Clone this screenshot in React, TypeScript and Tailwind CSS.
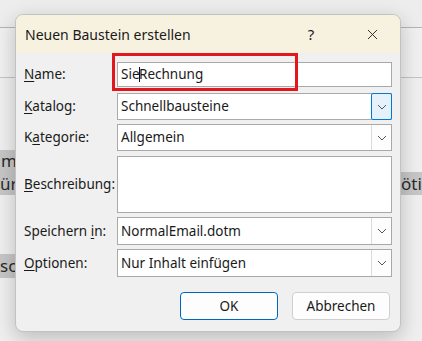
import { X } from 'lucide-react'

function Chevron() {
  return (
    <svg width="10" height="6" viewBox="0 0 10 6" fill="none">
      <path d="M1 1l4 4 4-4" stroke="#555" strokeWidth="1" />
    </svg>
  )
}

function Select({ value, focused }: { value: string; focused?: boolean }) {
  return (
    <div className="flex h-[27px] items-stretch border border-[#a9a9a9] bg-white">
      <div className="flex flex-1 items-center pl-[3px] text-[13.5px] text-[#1a1a1a]">{value}</div>
      {focused ? (
        <div className="-my-px -mr-px flex w-[21px] items-center justify-center rounded-[2px] border border-[#0078d4] bg-[#e5f1fb]">
          <Chevron />
        </div>
      ) : (
        <div className="flex w-[20px] items-center justify-center border-l border-[#dadada] bg-[#fdfdfd]">
          <Chevron />
        </div>
      )}
    </div>
  )
}

function Label({ pre, u, post }: { pre?: string; u: string; post?: string }) {
  return (
    <div className="flex items-center text-[13.5px] text-[#1a1a1a]">
      <span>
        {pre}
        <span className="underline underline-offset-2">{u}</span>
        {post}
      </span>
    </div>
  )
}

export default function App() {
  return (
    <div
      className="relative h-[341px] w-[422px] overflow-hidden bg-[#efefef]"
      style={{ fontFamily: '"Noto Sans", "Open Sans", sans-serif' }}
    >
      {/* document behind the dialog */}
      <div className="h-[28px] border-b border-[#b4b4b4] bg-[#ededed]" />
      <div className="h-[50px] border-b border-[#c4c4c4] bg-[#f0f0f0]" />
      <div className="h-[72px]" />
      <div className="flex justify-between text-[17px] leading-[22px] text-[#2a2a2a]">
        <div className="w-[40px] bg-[#c6c6c6] pl-px">m .</div>
      </div>
      <div className="flex justify-between text-[17px] leading-[23px] text-[#2a2a2a]">
        <div className="w-[40px] bg-[#c6c6c6]">ür</div>
        <div className="w-[22px] bg-[#c6c6c6] pl-px">öti</div>
      </div>
      <div className="h-[59px]" />
      <div className="flex text-[17px] leading-[24px] text-[#2a2a2a]">
        <div className="w-[40px] bg-[#c6c6c6]">sc</div>
      </div>

      {/* dialog */}
      <div className="absolute left-[15px] top-[14px] w-[386px] overflow-hidden rounded-[8px] border border-[#c2c2c2] bg-[#f0f0f0] shadow-[0_6px_20px_rgba(0,0,0,0.22)]">
        <div className="flex h-[38px] items-center bg-[#f7f2e0] pl-[9px] text-[14px] text-[#1a1a1a]">
          <span className="flex-1">Neuen Baustein erstellen</span>
          <span className="w-[74px] text-center text-[15px]">?</span>
          <span className="flex w-[52px] justify-center pr-[4px]">
            <X className="h-[17px] w-[17px] text-[#222]" strokeWidth={1.3} />
          </span>
        </div>

        <div className="relative px-[8px] pt-[9px] pb-[11px]">
          <div className="grid grid-cols-[93px_275px] gap-x-0">
            <Label u="N" post="ame:" />
            <div className="flex h-[25px] items-center border border-[#a9a9a9] bg-white pl-[3px] text-[13.5px] text-[#1a1a1a]">
              Sie<span className="mx-[-1px] inline-block h-[15px] w-[1.5px] bg-[#111]" />Rechnung
            </div>

            <div className="col-span-2 h-[6px]" />
            <Label u="K" post="atalog:" />
            <Select value="Schnellbausteine" focused />

            <div className="col-span-2 h-[4px]" />
            <Label pre="K" u="a" post="tegorie:" />
            <Select value="Allgemein" />

            <div className="col-span-2 h-[5px]" />
            <Label u="B" post="eschreibung:" />
            <div className="h-[57px] border border-[#a9a9a9] bg-white" />

            <div className="col-span-2 h-[4px]" />
            <Label pre="Speichern " u="i" post="n:" />
            <div className="[&>div]:h-[28px]">
              <Select value="NormalEmail.dotm" />
            </div>

            <div className="col-span-2 h-[4px]" />
            <Label u="O" post="ptionen:" />
            <div className="[&>div]:h-[28px]">
              <Select value="Nur Inhalt einfügen" />
            </div>
          </div>

          <div className="mt-[15px] flex justify-end gap-[14px] pr-[2px]">
            <button className="h-[28px] w-[98px] rounded-[4px] border border-[#0067c0] bg-[#fdfdfd] text-[13.5px] text-[#1a1a1a]">
              OK
            </button>
            <button className="h-[28px] w-[98px] rounded-[4px] border border-[#d0d0d0] bg-[#fdfdfd] text-[13.5px] text-[#1a1a1a]">
              Abbrechen
            </button>
          </div>

          {/* red highlight annotation */}
          <div className="pointer-events-none absolute left-[96px] top-0 h-[38px] w-[186px] border-[3px] border-[#e3161e]" />
        </div>
      </div>
    </div>
  )
}
